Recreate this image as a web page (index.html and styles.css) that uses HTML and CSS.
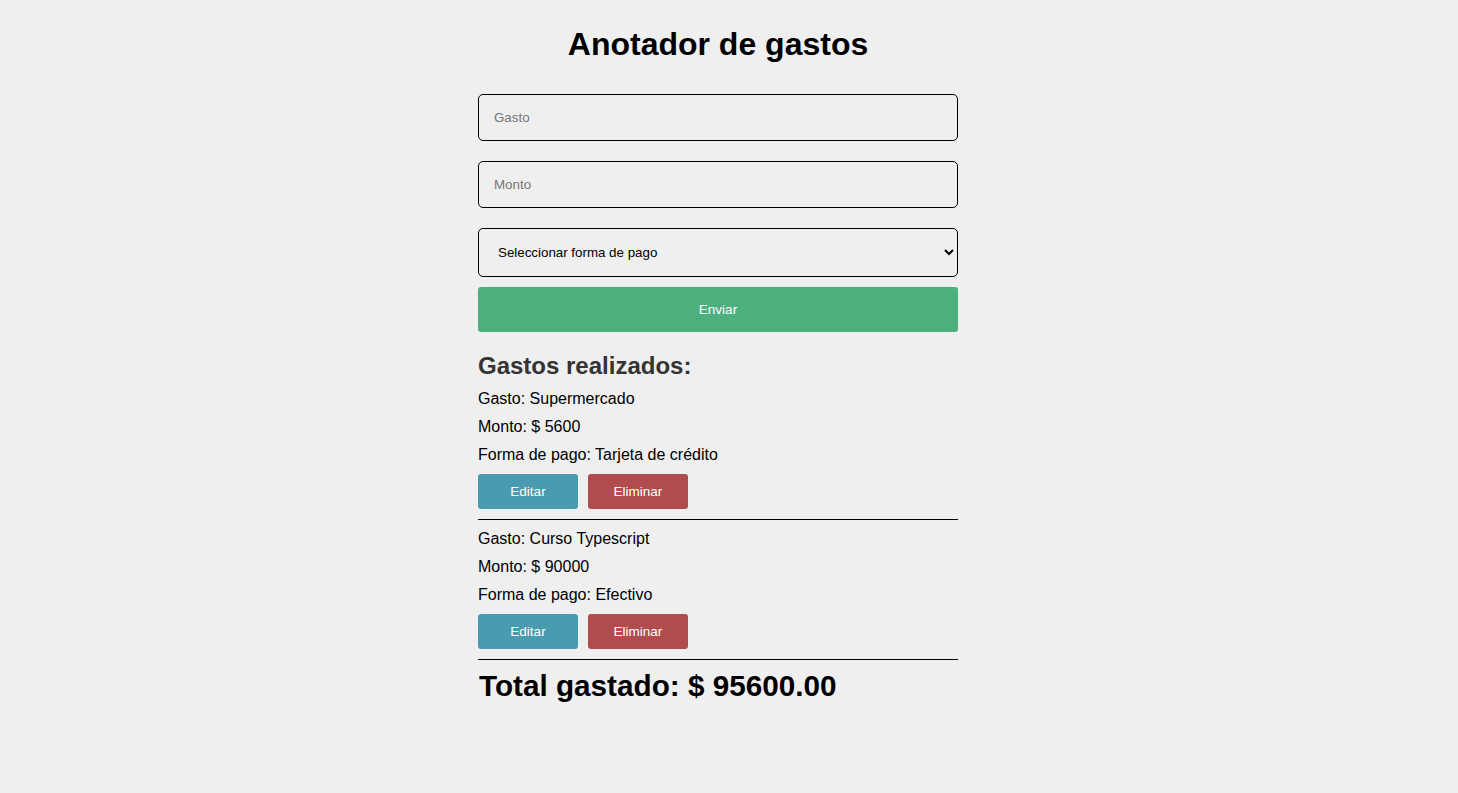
FILE: index.html
```html
<!DOCTYPE html>
<html lang="es">
<head>
<meta charset="utf-8">
<title>Anotador de gastos</title>
<link rel="stylesheet" href="styles.css">
</head>
<body>
<main class="app">
  <h1 class="title">Anotador de gastos</h1>
  <form class="form">
    <input class="field" type="text" placeholder="Gasto">
    <input class="field" type="text" placeholder="Monto">
    <select class="field select">
      <option>Seleccionar forma de pago</option>
      <option>Efectivo</option>
      <option>Tarjeta de crédito</option>
    </select>
    <button type="button" class="submit">Enviar</button>
  </form>
  <section class="list">
    <h2 class="subtitle">Gastos realizados:</h2>
    <div class="item">
      <p class="line">Gasto: Supermercado</p>
      <p class="line">Monto: $ 5600</p>
      <p class="line">Forma de pago: Tarjeta de crédito</p>
      <div class="actions">
        <button type="button" class="btn btn-edit">Editar</button>
        <button type="button" class="btn btn-delete">Eliminar</button>
      </div>
    </div>
    <div class="divider"></div>
    <div class="item">
      <p class="line">Gasto: Curso Typescript</p>
      <p class="line">Monto: $ 90000</p>
      <p class="line">Forma de pago: Efectivo</p>
      <div class="actions">
        <button type="button" class="btn btn-edit">Editar</button>
        <button type="button" class="btn btn-delete">Eliminar</button>
      </div>
    </div>
    <div class="divider"></div>
    <h1 class="total">Total gastado: $ 95600.00</h1>
  </section>
</main>
</body>
</html>
```

FILE: styles.css
```css
html, body {
  margin: 0;
  padding: 0;
  background: #efefef;
}
body {
  padding-right: 22px;
  font-family: "Liberation Sans", Arial, sans-serif;
  color: #000;
}
.app {
  width: 480px;
  margin: 0 auto;
  padding-top: 26px;
}
.title {
  margin: 0 0 31px;
  font-size: 32px;
  line-height: 37px;
  text-align: center;
  font-weight: bold;
}
.form {
  display: flex;
  flex-direction: column;
}
.field {
  box-sizing: border-box;
  width: 480px;
  height: 47px;
  margin: 0 0 20px;
  padding: 0 15px;
  border: 1px solid #000;
  border-radius: 5px;
  background: #efefef;
  font-family: "Liberation Sans", Arial, sans-serif;
  font-size: 13.33px;
  color: #000;
  outline: none;
}
.field::placeholder {
  color: #757575;
}
.select {
  height: 49px;
  margin-bottom: 10px;
}
.submit {
  height: 45px;
  border: none;
  border-radius: 3px;
  background: #4caf7e;
  color: #fff;
  font-family: "Liberation Sans", Arial, sans-serif;
  font-size: 13.5px;
  cursor: pointer;
}
.list {
  display: flex;
  flex-direction: column;
  gap: 10px;
  margin-top: 20px;
}
.subtitle {
  margin: 0;
  font-size: 24px;
  line-height: 28px;
  color: #333;
  font-weight: bold;
}
.item {
  display: flex;
  flex-direction: column;
  gap: 10px;
}
.line {
  margin: 0;
  font-size: 16px;
  line-height: 18px;
}
.actions {
  display: flex;
  gap: 10px;
}
.btn {
  width: 100px;
  height: 35px;
  border: none;
  border-radius: 3px;
  color: #fff;
  font-family: "Liberation Sans", Arial, sans-serif;
  font-size: 13.5px;
  cursor: pointer;
}
.btn-edit {
  background: #4b9bb0;
}
.btn-delete {
  background: #b04c4e;
}
.divider {
  height: 0;
  border-top: 1px solid #000;
}
.total {
  margin: 0;
  padding-left: 1px;
  font-size: 29.7px;
  line-height: 32px;
  font-weight: bold;
}
```
